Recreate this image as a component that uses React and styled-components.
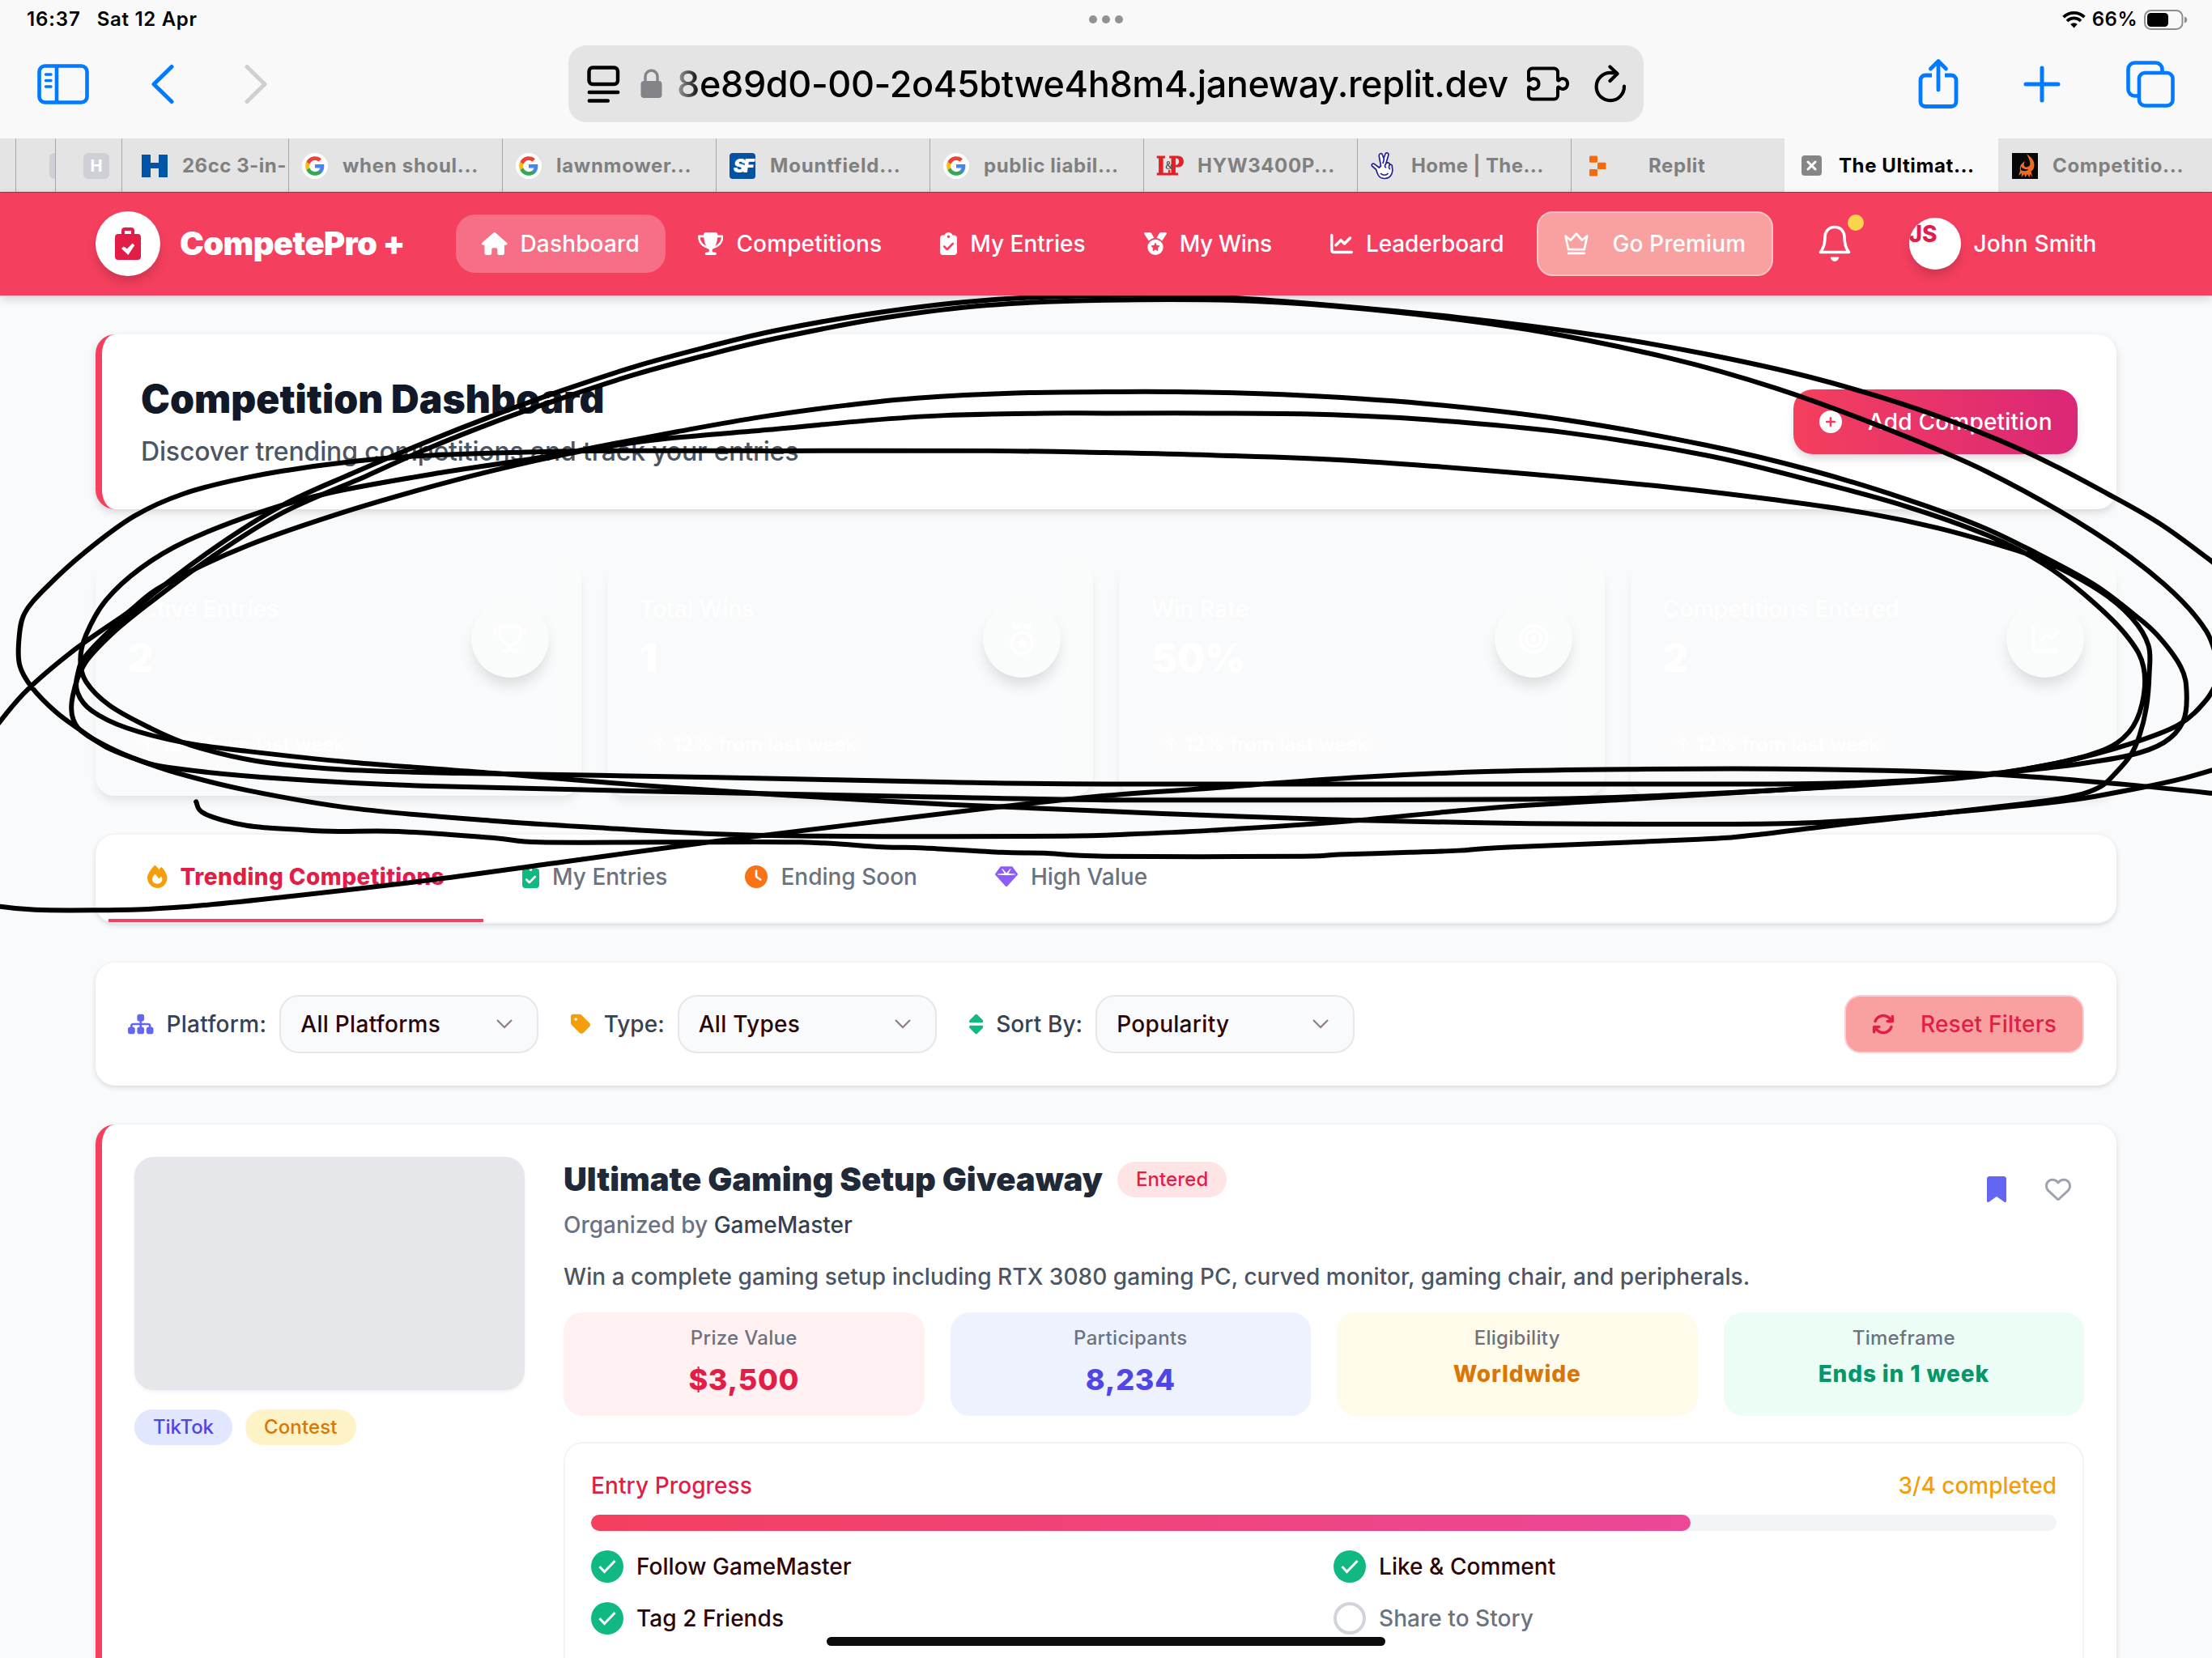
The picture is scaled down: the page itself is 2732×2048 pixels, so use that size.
import React from 'react';
import styled, { createGlobalStyle } from 'styled-components';
import {
  FaHouse, FaTrophy, FaClipboardCheck, FaMedal, FaChartLine, FaFire, FaClock, FaGem,
  FaSitemap, FaTag, FaSort, FaArrowsRotate, FaBookmark, FaRegHeart, FaCirclePlus,
} from 'react-icons/fa6';
import { RiTrophyLine, RiMedalLine, RiFocus2Line, RiLineChartLine } from 'react-icons/ri';

const Global = createGlobalStyle`
  *, *::before, *::after { box-sizing: border-box; }
  body { margin: 0; overflow: hidden; font-family: Inter, Roboto, sans-serif; }
  svg { display: block; flex: none; }
`;

const Screen = styled.div`
  position: relative;
  width: 2732px;
  height: 2048px;
  overflow: hidden;
  background: #f9fafb;
  display: flex;
  flex-direction: column;
  font-size: 28px;
  font-weight: 500;
`;

const T = styled.span`
  display: block;
  white-space: pre;
  font-size: ${(p) => p.$size || 28}px;
  line-height: ${(p) => p.$lh || 40}px;
  font-weight: ${(p) => p.$w || 500};
  color: ${(p) => p.$c || 'inherit'};
  letter-spacing: ${(p) => (p.$ls === undefined ? 0.1 : p.$ls)}px;
`;

/* ---------- tablet chrome ---------- */
const StatusBar = styled.div`
  height: 48px;
  flex: none;
  padding: 0 30px 0 33px;
  background: #f9f9f9;
  display: grid;
  grid-template-columns: 1fr auto 1fr;
  align-items: center;
  color: #000;
`;
const StatusGroup = styled.div`
  display: flex;
  align-items: center;
  gap: ${(p) => p.$gap}px;
  justify-content: ${(p) => (p.$end ? 'flex-end' : 'flex-start')};
`;
const Dots = styled(StatusGroup)`
  margin-right: 3px;
`;
const Dot = styled.i`
  width: 10px;
  height: 10px;
  border-radius: 50%;
  background: #929292;
`;
const Toolbar = styled.div`
  height: 123px;
  flex: none;
  padding: 8px 46px 20px 46px;
  background: #f9f9f9;
  display: flex;
  justify-content: space-between;
  align-items: flex-start;
`;
const ToolSide = styled.div`
  display: flex;
  align-items: center;
  justify-content: ${(p) => (p.$end ? 'flex-end' : 'flex-start')};
  width: 600px;
  height: 95px;
`;
const AddressBar = styled.div`
  width: 1328px;
  height: 95px;
  border-radius: 22px;
  background: #e4e4e4;
  display: flex;
  align-items: center;
  padding: 0 20px 0 23px;
`;
const Url = styled.div`
  margin-left: 18px;
  width: 1030px;
  height: 60px;
  display: flex;
  align-items: center;
  mask-image: linear-gradient(90deg, rgba(0,0,0,0.3), #000 30px);
`;
const Gap = styled.i`
  width: ${(p) => p.$w}px;
  flex: none;
`;
const TabStrip = styled.div`
  height: 67px;
  flex: none;
  display: flex;
  background: #e4e4e4;
  border-bottom: 1px solid #8d3c4c;
`;
const Tab = styled.div`
  width: ${(p) => p.$width || 264}px;
  flex: none;
  overflow: hidden;
  display: flex;
  align-items: center;
  padding: 1px 0 0 ${(p) => p.$pad || 16}px;
  gap: 18px;
  border-left: 1px solid ${(p) => (p.$edge === false ? 'transparent' : '#a9a9a9')};
  background: ${(p) => (p.$active ? '#f9f9f9' : 'transparent')};
  color: ${(p) => (p.$active ? '#000' : '#808080')};
`;
const CloseBox = styled.span`
  width: 25px;
  height: 25px;
  margin: 0 3px 0 4px;
  border-radius: 4px;
  background: #868686;
  display: grid;
  place-items: center;
`;

/* ---------- site header ---------- */
const Header = styled.header`
  height: 127px;
  flex: none;
  padding: 0 118px 1px;
  background: #f43f5e;
  color: #fff;
  display: flex;
  align-items: center;
  box-shadow: 0 4px 12px rgba(0, 0, 0, 0.16);
  z-index: 1;
`;
const Round = styled.div`
  width: ${(p) => p.$d}px;
  height: ${(p) => p.$d}px;
  flex: none;
  border-radius: 50%;
  background: #fff;
  display: flex;
  align-items: center;
  justify-content: center;
  box-shadow: 0 8px 14px -2px rgba(0, 0, 0, 0.18);
`;
const Brand = styled.div`
  display: flex;
  align-items: center;
  gap: 24px;
  width: 445px;
`;
const Nav = styled.nav`
  display: flex;
  align-items: center;
  gap: 8px;
`;
const NavItem = styled.div`
  height: 72px;
  padding: 0 32px;
  border-radius: 24px;
  display: flex;
  align-items: center;
  gap: 16px;
  background: ${(p) => (p.$active ? 'rgba(255,255,255,0.25)' : 'transparent')};
`;
const Premium = styled.div`
  height: 80px;
  width: 292px;
  padding: 0 32px;
  border-radius: 20px;
  border: 2px solid #fcc3c6;
  background: #f8a1a0;
  display: flex;
  align-items: center;
  gap: 30px;
`;
const Bell = styled.div`
  position: relative;
  margin: 0 72px 0 56px;
`;
const Badge = styled.i`
  position: absolute;
  right: -16px;
  top: -13px;
  width: 20px;
  height: 20px;
  border-radius: 50%;
  background: #fcd34d;
`;
const Avatar = styled(Round)`
  overflow: hidden;
  align-items: flex-start;
  justify-content: flex-start;
  margin-right: 16px;
`;

/* ---------- page body ---------- */
const Main = styled.main`
  padding: 48px 118px 0;
  display: flex;
  flex-direction: column;
`;
const Card = styled.section`
  flex: none;
  background: #fff;
  border-radius: 24px;
  border-left: ${(p) => (p.$accent ? '8px solid #f43f5e' : '0')};
  box-shadow: 0 2px 6px rgba(0, 0, 0, 0.14);
`;
const Hero = styled(Card)`
  height: 216px;
  padding: 0 48px;
  display: flex;
  align-items: center;
  justify-content: space-between;
  box-shadow: 0 4px 12px -1px rgba(0, 0, 0, 0.16);
`;
const AddButton = styled.div`
  width: 351px;
  height: 80px;
  border-radius: 24px;
  padding-left: 32px;
  display: flex;
  align-items: center;
  gap: 32px;
  color: #fff;
  background: linear-gradient(90deg, #f43f5e, #db2777);
  box-shadow: 0 6px 12px -2px rgba(0, 0, 0, 0.18);
`;
const Stats = styled.div`
  display: grid;
  grid-template-columns: repeat(4, 1fr);
  gap: 32px;
  margin: 64px 0 48px;
`;
const StatCard = styled.div`
  height: 290px;
  padding: 40px;
  border-radius: 24px;
  background: linear-gradient(90deg, #f9fafb 60%, #fafbfb);
  box-shadow: 0 8px 12px -2px rgba(0, 0, 0, 0.09);
  display: flex;
  flex-direction: column;
  justify-content: space-between;
  color: #fff;
`;
const StatTop = styled.div`
  display: flex;
  justify-content: space-between;
  align-items: flex-start;
  height: 112px;
`;
const StatIcon = styled(Round)`
  align-self: center;
  background: #fafbfb;
  box-shadow: 0 12px 18px -3px rgba(0, 0, 0, 0.13);
`;
const Trend = styled.div`
  align-self: flex-start;
  height: 44px;
  padding: 0 14px;
  margin-bottom: 1px;
  border-radius: 22px;
  background: rgba(255, 255, 255, 0.3);
  display: flex;
  align-items: center;
`;
const TabCard = styled(Card)`
  height: 110px;
  padding: 0 16px;
  border-bottom: 2px solid #f3f4f6;
  display: flex;
  align-items: stretch;
`;
const PageTab = styled.div`
  padding: 0 48px;
  display: flex;
  align-items: center;
  gap: 16px;
  color: #6b7280;
  border-bottom: 4px solid ${(p) => (p.$active ? '#f43f5e' : 'transparent')};
`;
const Filters = styled(Card)`
  height: 152px;
  margin: 48px 0;
  padding: 0 40px;
  display: flex;
  align-items: center;
  gap: 40px;
`;
const Filter = styled.div`
  display: flex;
  align-items: center;
  gap: 16px;
  color: #374151;
`;
const Select = styled.div`
  width: 320px;
  height: 72px;
  padding: 0 30px 0 24px;
  border: 2px solid #e5e7eb;
  border-radius: 24px;
  background: #f9fafb;
  color: #2a0508;
  display: flex;
  align-items: center;
  justify-content: space-between;
`;
const Reset = styled(Premium)`
  width: 296px;
  height: 72px;
  margin-left: auto;
  gap: 32px;
  color: #e11d48;
  border-color: #fecdd3;
`;
const Entry = styled(Card)`
  height: 800px;
  padding: 40px 40px 0;
  display: grid;
  grid-template-columns: 482px 1fr;
  column-gap: 48px;
  align-items: start;
`;
const Thumb = styled.div`
  height: 288px;
  border-radius: 24px;
  background: #e5e7eb;
  box-shadow: 0 2px 4px rgba(0, 0, 0, 0.06);
`;
const Row = styled.div`
  display: flex;
  align-items: center;
  justify-content: ${(p) => (p.$between ? 'space-between' : 'flex-start')};
  gap: ${(p) => p.$gap || 0}px;
  margin-top: ${(p) => p.$mt || 0}px;
`;
const Actions = styled.div`
  display: flex;
  gap: 44px;
  height: 56px;
  padding: 24px 16px 0 0;
`;
const Pill = styled.span`
  height: 44px;
  padding: 0 23px;
  border-radius: 22px;
  background: ${(p) => p.$bg};
  color: ${(p) => p.$fg};
  display: flex;
  align-items: center;
`;
const Facts = styled.div`
  margin-top: 24px;
  display: grid;
  grid-template-columns: repeat(4, 1fr);
  gap: 32px;
`;
const Fact = styled.div`
  height: 128px;
  padding-top: 16px;
  border-radius: 24px;
  background: ${(p) => p.$bg};
  display: flex;
  flex-direction: column;
  align-items: center;
`;
const Progress = styled.div`
  margin-top: 32px;
  height: 400px;
  padding: 32px;
  border: 2px solid #f3f4f6;
  border-radius: 24px;
`;
const Track = styled.div`
  margin: 16px 0 24px;
  height: 20px;
  border-radius: 10px;
  background: #f3f4f6;
`;
const Fill = styled.div`
  height: 100%;
  border-radius: 10px;
  background: linear-gradient(90deg, #f43f5e, #ec4899);
`;
const Tasks = styled.div`
  display: grid;
  grid-template-columns: 1fr 1fr;
  gap: 24px;
`;
const Task = styled.div`
  display: flex;
  align-items: center;
  gap: 16px;
  color: ${(p) => (p.$done ? '#2a0508' : '#6b7280')};
`;
const Check = styled.span`
  width: 40px;
  height: 40px;
  border-radius: 50%;
  background: ${(p) => (p.$done ? '#10b981' : '#fff')};
  border: ${(p) => (p.$done ? '0' : '4px solid #d1d5db')};
  display: grid;
  place-items: center;
`;
const HomeBar = styled.div`
  position: absolute;
  left: 1021px;
  top: 2022px;
  width: 690px;
  height: 11px;
  border-radius: 6px;
  background: #0c0c0c;
`;
const Ink = styled.svg`
  position: absolute;
  left: 0;
  top: 360px;
  width: 2732px;
  height: 800px;
  overflow: visible;
  pointer-events: none;
`;

/* ---------- drawings ---------- */
const BLUE = '#007aff';

const Wifi = () => (
  <svg width="29" height="22" viewBox="0 0 29 22" fill="none" stroke="#000" strokeWidth="3.8">
    <path d="M1.6 8.2a18.4 18.4 0 0 1 25.8 0M6 13a12 12 0 0 1 17 0" />
    <path d="M14.5 21.5l-4.3-4.4a6.1 6.1 0 0 1 8.6 0z" fill="#000" stroke="none" />
  </svg>
);
const Battery = () => (
  <svg width="54" height="25" viewBox="0 0 54 25">
    <rect x="1" y="1" width="46.5" height="23" rx="7.5" fill="none" stroke="#8e8e8e" strokeWidth="2" />
    <rect x="4" y="4" width="26" height="17" rx="4.5" fill="#000" />
    <path d="M50 8.5c2.6 1 3.2 2.2 3.2 4s-.6 3-3.2 4z" fill="#8e8e8e" />
  </svg>
);
const SidebarIcon = () => (
  <svg width="64" height="50" viewBox="0 0 64 50" fill="none" stroke={BLUE} strokeWidth="4.6" strokeLinecap="round">
    <rect x="2.5" y="2.5" width="59" height="45" rx="7" />
    <path d="M24 3v44" />
    <path d="M10.5 13h6.5M10.5 20.5h6.5M10.5 28h6.5" strokeWidth="3.4" />
  </svg>
);
const Chevron = ({ flip }) => (
  <svg width="28" height="50" viewBox="0 0 28 50" fill="none" stroke={flip ? '#cfcfcf' : BLUE} strokeWidth="5" strokeLinecap="round" strokeLinejoin="round">
    <path d={flip ? 'M3 3.5L25 25 3 46.5' : 'M25 3.5L3 25l22 21.5'} />
  </svg>
);
const ReaderIcon = () => (
  <svg width="41" height="46" viewBox="0 0 41 46" fill="none" stroke="#000" strokeWidth="4.4" strokeLinecap="round">
    <rect x="2.5" y="2.5" width="35.5" height="20.5" rx="4.5" />
    <path d="M2.8 33h35.4M2.8 43.5h23" />
  </svg>
);
const LockIcon = () => (
  <svg width="27" height="37" viewBox="0 0 27 37" fill="none">
    <path d="M6 17V9.500a7.500 7.500 0 0 1 15 0V17" stroke="#838388" strokeWidth="3.4" />
    <rect x="0.5" y="15" width="26" height="21" rx="4" fill="#838388" />
  </svg>
);
const PuzzleIcon = () => (
  <svg width="54" height="43" viewBox="0 0 54 43" fill="none" stroke="#000" strokeWidth="4" strokeLinejoin="round">
    <path d="M7.500 2.500h27a4.500 4.500 0 0 1 4.500 4.500v9.500c0 .900.900 1.300 1.500.700 3.400-4.200 10.500-2 10.500 4.300s-7.100 8.500-10.500 4.300c-.600-.600-1.500-.200-1.500.700V36a4.500 4.500 0 0 1-4.500 4.500h-27A4.500 4.500 0 0 1 3 36v-9.500c0-.900.900-1.300 1.500-.700 3.400 4.200 11 2 11-4.300s-7.600-8.500-11-4.300C3.900 17.800 3 17.400 3 16.500V7a4.500 4.500 0 0 1 4.500-4.500z" />
  </svg>
);
const ReloadIcon = () => (
  <svg width="40" height="47" viewBox="0 0 40 47" fill="none" stroke="#000" strokeWidth="4.2" strokeLinecap="round" strokeLinejoin="round">
    <path d="M37 26.500A17.200 17.200 0 1 1 19.800 9.800c3.400 0 5.500.300 7.700.900" />
    <path d="M19.500 2.500l9 8.500-9 9" />
  </svg>
);
const ShareIcon = () => (
  <svg width="50" height="64" viewBox="0 0 50 64" fill="none" stroke={BLUE} strokeWidth="4.8" strokeLinecap="round" strokeLinejoin="round">
    <path d="M17 21H9a6 6 0 0 0-6 6v26.500a6 6 0 0 0 6 6h32a6 6 0 0 0 6-6V27a6 6 0 0 0-6-6h-8" strokeLinecap="butt" />
    <path d="M25 39V4M15.500 13L25 3.500l9.500 9.500" />
  </svg>
);
const PlusIcon = () => (
  <svg width="46" height="46" viewBox="0 0 46 46" stroke={BLUE} strokeWidth="5" strokeLinecap="round">
    <path d="M23 3v40M3 23h40" />
  </svg>
);
const TabsIcon = () => (
  <svg width="60" height="58" viewBox="0 0 60 58" fill="none" stroke={BLUE} strokeWidth="4.6">
    <rect x="16" y="15" width="41.5" height="40.5" rx="7" />
    <path d="M16 43.500h-5.500a8 8 0 0 1-8-8v-25a8 8 0 0 1 8-8h26a8 8 0 0 1 8 8V15" />
  </svg>
);
const GoogleIcon = () => (
  <svg width="32" height="32" viewBox="0 0 32 32">
    <circle cx="16" cy="16" r="16" fill="#fff" />
    <g transform="translate(4.200 4.200) scale(.985)">
      <path fill="#4285f4" d="M23.490 12.270c0-.790-.070-1.540-.190-2.270H12v4.510h6.470c-.290 1.480-1.140 2.730-2.400 3.580v3h3.860c2.260-2.090 3.560-5.170 3.560-8.820z" />
      <path fill="#34a853" d="M12 24c3.240 0 5.950-1.080 7.930-2.910l-3.860-3c-1.080.720-2.450 1.160-4.070 1.160-3.130 0-5.780-2.110-6.730-4.960H1.290v3.090C3.260 21.300 7.310 24 12 24z" />
      <path fill="#fbbc05" d="M5.270 14.290c-.250-.720-.380-1.490-.380-2.290s.140-1.570.380-2.290V6.620H1.290C.470 8.240 0 10.060 0 12s.470 3.760 1.290 5.380l3.980-3.090z" />
      <path fill="#ea4335" d="M12 4.750c1.770 0 3.350.610 4.600 1.800l3.420-3.420C17.950 1.190 15.240 0 12 0 7.310 0 3.260 2.700 1.290 6.620l3.980 3.090c.950-2.850 3.600-4.960 6.730-4.960z" />
    </g>
  </svg>
);
const Favicon = styled.span`
  width: 32px;
  height: 32px;
  flex: none;
  border-radius: ${(p) => (p.$r === undefined ? 4 : p.$r)}px;
  background: ${(p) => p.$bg || 'transparent'};
  color: ${(p) => p.$fg || '#fff'};
  font: ${(p) => p.$font || '700 20px/32px Inter, sans-serif'};
  letter-spacing: ${(p) => p.$ls || 0}px;
  text-align: center;
  white-space: nowrap;
`;
const Monogram = styled.span`
  width: 32px;
  height: 32px;
  flex: none;
  display: flex;
  justify-content: center;
  align-items: center;
  color: #e41f26;
  font: 700 31px/32px "DejaVu Serif", serif;
  transform: scaleX(0.8);
  -webkit-text-stroke: 1px #e41f26;
`;
const Amp = styled.small`
  font: 700 15px/32px "Liberation Serif", serif;
  color: #555;
  margin: 0 -7px 2px -8px;
  z-index: 1;
  -webkit-text-stroke: 0;
`;
const HandIcon = () => (
  <svg width="32" height="34" viewBox="0 0 32 34" fill="#fff" stroke="#20209a" strokeWidth="1.7" strokeLinejoin="round">
    <path d="M12.500 17L10.300 5C9.800 1.500 13.500 .500 14.500 3.500l1.500 4 2-5.300c1.300-2.700 4.600-1.200 3.800 1.500L18.800 14c2-2 4.700-1 4.500 1.200 2-.500 3.600 1 3 3 1.500 5.500-.300 14.300-9.300 14.300-7.300 0-9-6-10.300-11L1.500 17c-1-2.200 1-3.500 3-2.400l5.800 4.400z" />
    <path d="M16.500 8l-1.500 6M18.800 14c-2 3-1.500 5 .5 5M23.300 15.500c-1.500 3-1 5 .8 5.500M12 26c3 3 7 3 9.500 0" fill="none" />
  </svg>
);
const ReplitIcon = () => (
  <svg width="22" height="26" viewBox="0 0 22 26" fill="#f56a0a">
    <rect x="0" y="0.5" width="10" height="8.3" rx="1.2" />
    <rect x="10" y="8.8" width="10.5" height="8.3" rx="1.2" />
    <rect x="0" y="17.1" width="10" height="8.3" rx="1.2" />
  </svg>
);
const FlameIcon = () => (
  <svg width="32" height="32" viewBox="0 0 32 32">
    <rect width="32" height="32" fill="#070707" />
    <path fill="#ee6b1f" d="M18 1c7 5 11 10 9 17-.700 2.600-2 4-3.500 4.800l1.800 7-3-3.800-.800 4.500-2.500-4.500-2.500 4-1.500-4-3.500 4 .500-5-4 3 2-6c-1-6 1-8.500 6-12-3 6 0 9 4.500 6.500 4-2.300 1-8-2.500-15.500z" />
    <path fill="#070707" d="M11 17c2 2.500 5 3.500 9 3-1 2.500-5 3-9 1z" />
  </svg>
);
const BagIcon = () => (
  <svg width="48" height="48" viewBox="0 0 24 24" fill="#e11d48" fillRule="evenodd">
    <path d="M4 8a2 2 0 0 1 2-2h2V4a2 2 0 0 1 2-2h4a2 2 0 0 1 2 2v2h2a2 2 0 0 1 2 2v12a2 2 0 0 1-2 2H6a2 2 0 0 1-2-2zM10 4v2h4V4zM8 15l4.200 4 3.900-6-1.300-1.200-3.300 3.300L9.400 13.700z" />
  </svg>
);
const CrownIcon = () => (
  <svg width="30" height="28" viewBox="0 0 30 28" fill="none" stroke="#fff" strokeWidth="2.7" strokeLinecap="round" strokeLinejoin="round">
    <path d="M1.600 4.500l6.400 5.200L14.900 1.700l6.900 8 6.400-5.200-3.500 16.700H5.100zM5.100 25.900h19.600" />
  </svg>
);
const BellIcon = () => (
  <svg width="40" height="46" viewBox="0 0 40 46" fill="none" stroke="#fff" strokeWidth="3.6" strokeLinecap="round" strokeLinejoin="round">
    <path d="M20 2.500c-7.500 0-12 5.500-12 12.500 0 9-1.800 13.500-5.500 18.500h35C33.800 28.500 32 24 32 15c0-7-4.500-12.500-12-12.500z" />
    <path d="M14.800 39.500h10.400a5.200 5.200 0 0 1-10.400 0z" fill="#fff" stroke="none" />
  </svg>
);
const Caret = () => (
  <svg width="20" height="12" viewBox="0 0 20 12" fill="none" stroke="#8f7c80" strokeWidth="2.2">
    <path d="M1 1l9 9 9-9" />
  </svg>
);
const Tick = () => (
  <svg width="22" height="18" viewBox="0 0 22 18" fill="none" stroke="#fff" strokeWidth="3">
    <path d="M1.500 9l6 6.500L20.500 2" />
  </svg>
);

/* Hand-drawn loops: points on a 3136-wide grid, joined by smooth curves. */
const R = (list) => list.map(([x, y]) => [x + 1568, y]);
const strokes = [
  [
    [278, 1412], [290, 1445], [350, 1478], [430, 1490], [480, 1494], [565, 1494], [700, 1512], [765, 1524], [940, 1524], [1135, 1524],
    [1250, 1537], [1310, 1540], [1420, 1552], [1480, 1554],
    ...R([[0, 1563], [270, 1563], [330, 1558], [430, 1552], [500, 1547], [570, 1538], [840, 1516], [910, 1506], [1020, 1480], [1100, 1462],
      [1300, 1418], [1375, 1395], [1410, 1370], [1430, 1335], [1452, 1285], [1465, 1230], [1475, 1150], [1479, 1060], [1478, 980],
      [1455, 905], [1410, 830], [1330, 745], [1280, 710], [1180, 655], [1080, 614], [950, 577], [800, 542], [600, 505], [350, 468], [150, 453], [0, 446]]),
    [1400, 441], [1100, 441], [840, 441], [700, 447], [570, 458], [460, 480], [350, 515], [260, 560], [190, 622], [120, 722], [65, 820],
    [35, 890], [27, 960], [28, 1035], [45, 1095], [80, 1165], [115, 1215], [150, 1260], [190, 1292], [250, 1332], [350, 1380], [500, 1430],
    [700, 1465], [860, 1485], [1000, 1500], [1150, 1507], [1350, 1508],
    ...R([[-60, 1507], [30, 1502], [150, 1491], [330, 1468], [540, 1430], [750, 1404], [950, 1380], [1100, 1360], [1250, 1335], [1350, 1315],
      [1450, 1284], [1500, 1248], [1527, 1190], [1532, 1110], [1524, 1040], [1490, 950], [1455, 890], [1400, 810], [1320, 725], [1240, 650],
      [1130, 572], [1000, 495], [850, 425], [650, 355], [450, 310], [250, 285], [100, 278], [0, 278]]),
    [1440, 281], [1300, 295], [1200, 315], [1080, 347], [960, 388], [860, 425], [780, 455], [620, 503], [470, 556], [370, 610], [265, 690], [200, 765],
    [150, 855], [122, 950], [114, 1020], [122, 1080], [155, 1145], [210, 1205], [270, 1255], [360, 1298], [480, 1322], [650, 1333], [850, 1339],
    [1100, 1348], [1350, 1358],
    ...R([[0, 1363], [500, 1363], [920, 1363], [1070, 1359], [1220, 1343], [1330, 1312], [1410, 1272], [1450, 1220], [1469, 1140], [1471, 1040],
      [1450, 960], [1400, 860], [1330, 755], [1250, 675], [1130, 592], [1000, 523], [850, 453], [650, 390], [450, 354], [300, 340], [150, 337], [0, 337]]),
    [1480, 337], [1340, 343], [1230, 357], [1100, 381], [940, 408], [850, 433], [760, 468], [640, 525], [500, 603], [350, 704], [230, 815],
    [180, 890], [110, 985], [40, 1100], [0, 1190], [-60, 1340], [-90, 1560], [-40, 1685], [0, 1702], [50, 1711], [130, 1712], [210, 1709],
    [290, 1698], [400, 1676], [600, 1631], [800, 1578], [1000, 1525], [1200, 1477], [1400, 1430],
    ...R([[0, 1395], [150, 1374], [350, 1345], [550, 1328], [750, 1322], [950, 1321], [1150, 1328], [1300, 1341], [1450, 1365], [1590, 1393]]),
  ],
  [
    ...R([[1590, 1312], [1530, 1346], [1470, 1372], [1380, 1404], [1300, 1422], [1150, 1450], [1000, 1470], [850, 1474], [600, 1472], [350, 1463], [150, 1450]]),
    [1568, 1438], [1350, 1420], [1100, 1392], [900, 1365], [700, 1333], [500, 1303], [350, 1272], [260, 1248], [180, 1208], [130, 1160],
    [110, 1110], [110, 1060], [125, 1000], [190, 880], [300, 715], [400, 592], [500, 503], [600, 420], [700, 343], [800, 272], [900, 208],
    [1000, 155], [1100, 108], [1250, 57], [1400, 24],
    ...R([[0, 11], [150, 15], [280, 32], [500, 72], [700, 122], [850, 173], [1000, 238], [1150, 325], [1300, 440], [1420, 560], [1500, 650], [1590, 780]]),
  ],
  [
    ...R([[1580, 1060], [1560, 1130], [1520, 1200], [1450, 1253], [1360, 1300], [1250, 1338], [1150, 1356], [950, 1380], [800, 1394], [600, 1405], [300, 1407], [0, 1407]]),
    [1300, 1398], [900, 1382], [600, 1368], [400, 1348], [250, 1320], [190, 1292], [125, 1230], [104, 1185], [103, 1120], [120, 1030],
    [160, 945], [210, 865], [300, 735], [400, 613], [520, 510], [600, 440], [700, 362], [800, 293], [900, 230], [1000, 177], [1100, 130], [1250, 74], [1400, 38],
    ...R([[0, 24], [200, 26], [400, 55], [600, 106], [800, 185], [950, 268], [1100, 375], [1250, 500], [1400, 665], [1500, 810], [1560, 940], [1580, 1060]]),
  ],
];
const smooth = (pts) =>
  pts.slice(0, -1).reduce((d, p, i) => {
    const a = pts[i - 1] || p;
    const n = pts[i + 1];
    const b = pts[i + 2] || n;
    return `${d} C${p[0] + (n[0] - a[0]) / 6} ${p[1] + (n[1] - a[1]) / 6} ${n[0] - (b[0] - p[0]) / 6} ${n[1] - (b[1] - p[1]) / 6} ${n[0]} ${n[1]}`;
  }, `M${pts[0][0]} ${pts[0][1]}`);

/* ---------- data ---------- */
const tabs = [
  [<GoogleIcon />, 'when shoul...', 0.7],
  [<GoogleIcon />, 'lawnmower...', 0.7],
  [<Favicon $bg="#0552a3" $font="italic 900 23px/32px Inter, sans-serif" $ls={-3}>SF</Favicon>, 'Mountfield...', 0.8],
  [<GoogleIcon />, 'public liabil...', 0.6],
  [<Monogram>L<Amp>&amp;</Amp>P</Monogram>, 'HYW3400P...', 0.6],
  [<HandIcon />, 'Home | The...', 0.4],
];
const nav = [
  [FaHouse, 31.5, 'Dashboard', 0.15],
  [FaTrophy, 31.5, 'Competitions', 0.15],
  [FaClipboardCheck, 21, 'My Entries', 0],
  [FaMedal, 28, 'My Wins', -0.3],
  [FaChartLine, 28, 'Leaderboard', -0.08],
];
const stats = [
  ['Active Entries', '2', RiTrophyLine],
  ['Total Wins', '1', RiMedalLine],
  ['Win Rate', '50%', RiFocus2Line],
  ['Competitions Entered', '2', RiLineChartLine],
];
const pageTabs = [
  [FaFire, 24.5, '#f59e0b', 'Trending Competitions'],
  [FaClipboardCheck, 21, '#10b981', 'My Entries'],
  [FaClock, 28, '#f97316', 'Ending Soon'],
  [FaGem, 28, '#8b5cf6', 'High Value'],
];
const filters = [
  [FaSitemap, 31.5, '#6366f1', 'Platform:', 'All Platforms', 0.3],
  [FaTag, 24.5, '#f59e0b', 'Type:', 'All Types', 0],
  [FaSort, 17.5, '#10b981', 'Sort By:', 'Popularity', 0.1],
];
const facts = [
  ['#fff1f2', '#e11d48', 'Prize Value', '$3,500', true],
  ['#eef2ff', '#4f46e5', 'Participants', '8,234', true],
  ['#fffbeb', '#d97706', 'Eligibility', 'Worldwide', false],
  ['#ecfdf5', '#059669', 'Timeframe', 'Ends in 1 week', false],
];
const tasks = [
  ['Follow GameMaster', true],
  ['Like & Comment', true],
  ['Tag 2 Friends', true],
  ['Share to Story', false],
];
const completed = 75;

/* Glyphs share a 28px height; each has its own width. */
const Glyph = styled.span`
  svg { height: 28px; width: ${(p) => p.$width}px; }
  color: ${(p) => p.$c || 'inherit'};
`;

export default function App() {
  return (
    <Screen>
      <Global />
      <StatusBar>
        <StatusGroup $gap={20}>
          <T $size={24} $w={600} $ls={0.9}>16:37</T>
          <T $size={24} $w={600} $ls={0.7}>Sat 12 Apr</T>
        </StatusGroup>
        <Dots $gap={6}><Dot /><Dot /><Dot /></Dots>
        <StatusGroup $gap={8} $end>
          <Wifi />
          <T $size={24} $w={600} $ls={0.5}>66%</T>
          <Battery />
        </StatusGroup>
      </StatusBar>
      <Toolbar>
        <ToolSide>
          <SidebarIcon /><Gap $w={77} /><Chevron /><Gap $w={87} /><Chevron flip />
        </ToolSide>
        <AddressBar>
          <ReaderIcon /><Gap $w={25} /><LockIcon />
          <Url><T $size={45} $lh={60} $ls={-0.4} $c="#000">8e89d0-00-2o45btwe4h8m4.janeway.replit.dev</T></Url>
          <Gap $w={19} /><PuzzleIcon /><Gap $w={30} /><ReloadIcon />
        </AddressBar>
        <ToolSide $end>
          <ShareIcon /><Gap $w={80} /><PlusIcon /><Gap $w={81} /><TabsIcon />
        </ToolSide>
      </Toolbar>
      <TabStrip>
        <Tab $width={19} $edge={false} />
        <Tab $width={49} $pad={41}><Favicon $bg="#cfcfd8" $r={6} /></Tab>
        <Tab $width={82} $pad={34}><Favicon $bg="#cfcfd8" $r={6}>H</Favicon></Tab>
        <Tab $width={206} $pad={24}>
          <svg width="32" height="28" viewBox="0 0 32 28" fill="#0055a6"><path d="M0 0h11v10h10V0h11v28H21V17H11v11H0z" /></svg>
          <T $size={24} $w={700} $ls={0.5}>26cc 3-in-</T>
        </Tab>
        {tabs.map(([icon, label, spacing]) => (
          <Tab key={label}>{icon}<T $size={24} $w={700} $ls={spacing}>{label}</T></Tab>
        ))}
        <Tab $pad={22}><ReplitIcon /><Gap $w={15} /><T $size={24} $w={700} $ls={0.6}>Replit</T></Tab>
        <Tab $edge={false} $active>
          <CloseBox>
            <svg width="13" height="13" viewBox="0 0 13 13" stroke="#fff" strokeWidth="3" strokeLinecap="round"><path d="M2 2l9 9M11 2l-9 9" /></svg>
          </CloseBox>
          <T $size={24} $w={700} $ls={0.6}>The Ultimat...</T>
        </Tab>
        <Tab $edge={false}><FlameIcon /><T $size={24} $w={700} $ls={0.7}>Competitio...</T></Tab>
      </TabStrip>

      <Header>
        <Brand>
          <Round $d={80}><BagIcon /></Round>
          <T $size={40} $lh={56} $w={900} $ls={-0.65}>CompetePro +</T>
        </Brand>
        <Nav>
          {nav.map(([Icon, width, label, spacing], i) => (
            <NavItem key={label} $active={i === 0}>
              <Glyph $width={width}><Icon /></Glyph>
              <T $ls={spacing}>{label}</T>
            </NavItem>
          ))}
          <Premium><CrownIcon /><T>Go Premium</T></Premium>
        </Nav>
        <Bell><BellIcon /><Badge /></Bell>
        <Avatar $d={64}><T $w={800} $c="#e11d48">JS</T></Avatar>
        <T $ls={0.15}>John Smith</T>
      </Header>

      <Main>
        <Hero $accent>
          <div>
            <T $size={48} $lh={64} $w={900} $ls={0.03} $c="#111827">Competition Dashboard</T>
            <Row $mt={9}><T $size={32} $lh={48} $ls={-0.17} $c="#4b5563">Discover trending competitions and track your entries</T></Row>
          </div>
          <AddButton><FaCirclePlus size={28} /><T $ls={0.2}>Add Competition</T></AddButton>
        </Hero>
        <Stats>
          {stats.map(([label, value, Icon]) => (
            <StatCard key={label}>
              <StatTop>
                <div>
                  <T $lh={39} $ls={0.15}>{label}</T>
                  <T $size={48} $lh={82} $w={900}>{value}</T>
                </div>
                <StatIcon $d={96}><Icon size={44} /></StatIcon>
              </StatTop>
              <Trend><T $size={24} $ls={0.2}>↑ 12% from last week</T></Trend>
            </StatCard>
          ))}
        </Stats>
        <TabCard>
          {pageTabs.map(([Icon, width, color, label], i) => (
            <PageTab key={label} $active={i === 0}>
              <Glyph $c={color} $width={width}><Icon /></Glyph>
              <T $w={i === 0 ? 800 : 500} $ls={i === 0 ? 0.42 : 0} $c={i === 0 ? '#e11d48' : '#6b7280'}>{label}</T>
            </PageTab>
          ))}
        </TabCard>
        <Filters>
          {filters.map(([Icon, width, color, label, value, spacing]) => (
            <Filter key={label}>
              <Glyph $c={color} $width={width}><Icon /></Glyph>
              <T $ls={spacing}>{label}</T>
              <Select><T $ls={0.3}>{value}</T><Caret /></Select>
            </Filter>
          ))}
          <Reset><FaArrowsRotate size={28} /><T $ls={0.2}>Reset Filters</T></Reset>
        </Filters>
        <Entry $accent>
          <div>
            <Thumb />
            <Row $gap={16} $mt={24}>
              <Pill $bg="#e0e7ff" $fg="#4f46e5"><T $size={24} $ls={-0.1}>TikTok</T></Pill>
              <Pill $bg="#fef3c7" $fg="#d97706"><T $size={24} $ls={0.15}>Contest</T></Pill>
            </Row>
          </div>
          <div>
            <Row $between>
              <Row $gap={18}>
                <T $size={40} $lh={56} $w={900} $ls={-0.04} $c="#1f2937">Ultimate Gaming Setup Giveaway</T>
                <Pill $bg="#ffe4e6" $fg="#e11d48"><T $size={24}>Entered</T></Pill>
              </Row>
              <Actions>
                <FaBookmark size={32} color="#6366f1" />
                <FaRegHeart size={32} color="#9ca3af" />
              </Actions>
            </Row>
            <Row $mt={8}>
              <T $ls={0} $c="#6b7280">Organized by </T>
              <T $ls={0} $c="#374151">GameMaster</T>
            </Row>
            <Row $mt={24}>
              <T $ls={0.05} $c="#4b5563">Win a complete gaming setup including RTX 3080 gaming PC, curved monitor, gaming chair, and peripherals.</T>
            </Row>
            <Facts>
              {facts.map(([bg, fg, label, value, large]) => (
                <Fact key={label} $bg={bg}>
                  <T $size={24} $lh={32} $ls={0.3} $c="#6b7280">{label}</T>
                  <T $size={large ? 36 : 28} $lh={large ? 70 : 56} $w={800} $ls={large ? 0.7 : 0.85} $c={fg}>{value}</T>
                </Fact>
              ))}
            </Facts>
            <Progress>
              <Row $between>
                <T $c="#e11d48">Entry Progress</T>
                <T $ls={0} $c="#f59e0b">3/4 completed</T>
              </Row>
              <Track><Fill style={{ width: `${completed}%` }} /></Track>
              <Tasks>
                {tasks.map(([label, done]) => (
                  <Task key={label} $done={done}>
                    <Check $done={done}>{done && <Tick />}</Check>
                    <T $ls={0.05}>{label}</T>
                  </Task>
                ))}
              </Tasks>
            </Progress>
          </div>
        </Entry>
      </Main>

      <HomeBar />
      <Ink viewBox="0 0 3136 1792" preserveAspectRatio="none">
        {strokes.map((pts, i) => (
          <path key={i} d={smooth(pts)} fill="none" stroke="#000" strokeWidth="6" strokeLinecap="round" vectorEffect="non-scaling-stroke" />
        ))}
      </Ink>
    </Screen>
  );
}
